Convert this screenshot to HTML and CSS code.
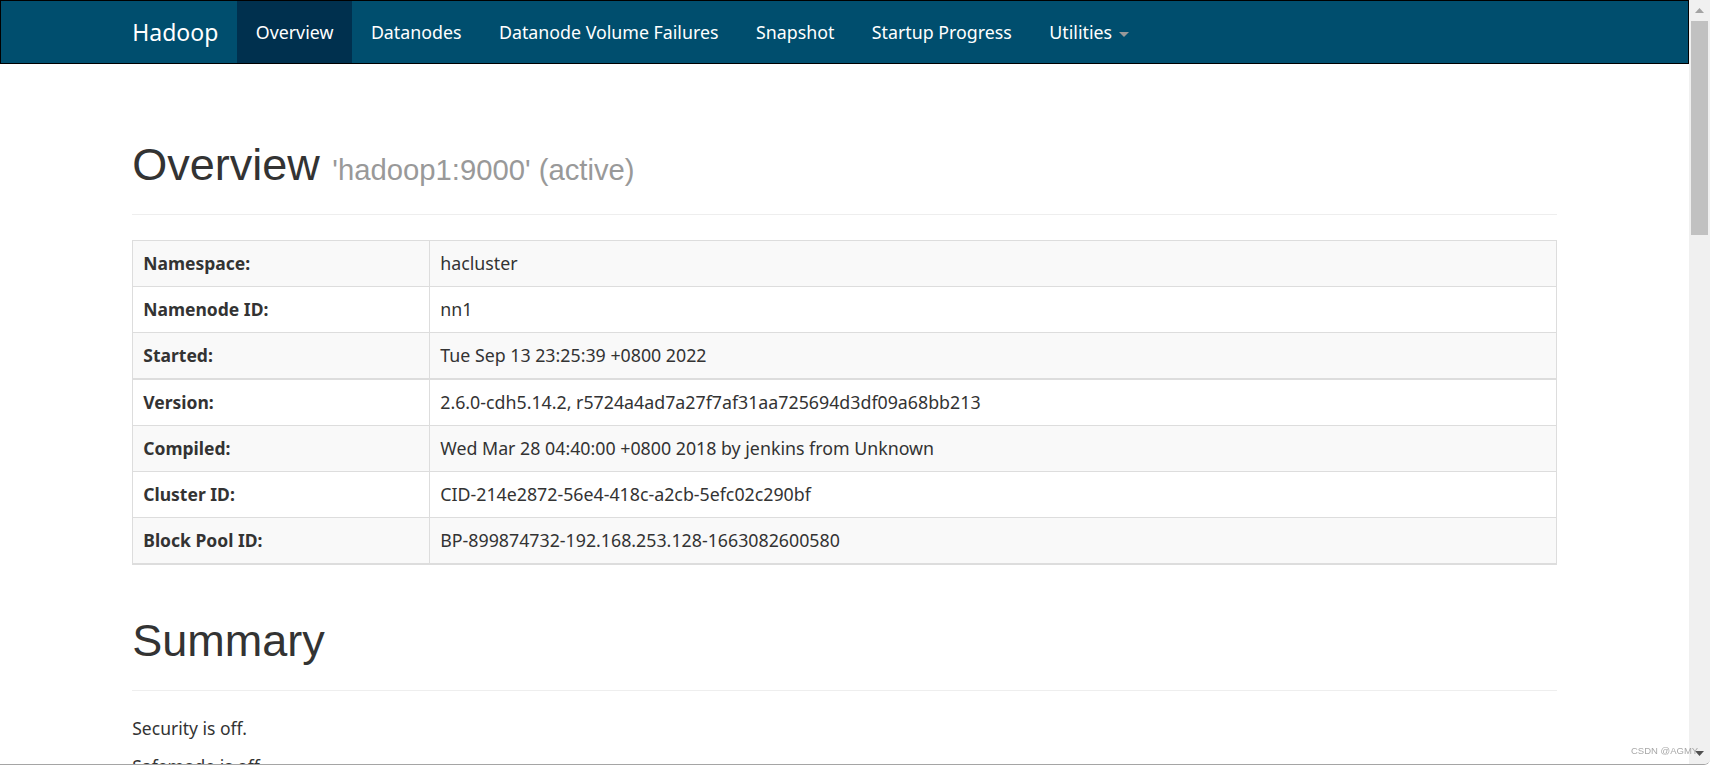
FILE: index.html
```html
<!DOCTYPE html>
<html lang="en">
<head>
<meta charset="utf-8">
<title>Namenode information</title>
<link rel="stylesheet" href="styles.css">
</head>
<body>
<div class="window">
  <div class="viewport">
    <nav class="navbar">
      <div class="container nav-inner">
        <a class="brand" href="#">Hadoop</a>
        <ul class="nav">
          <li class="active"><a href="#">Overview</a></li>
          <li><a href="#">Datanodes</a></li>
          <li><a href="#">Datanode Volume Failures</a></li>
          <li><a href="#">Snapshot</a></li>
          <li><a href="#">Startup Progress</a></li>
          <li><a href="#">Utilities <span class="caret"></span></a></li>
        </ul>
      </div>
    </nav>
    <div class="container main">
      <div class="page-header">
        <h1>Overview <small>'hadoop1:9000' (active)</small></h1>
      </div>
      <table class="info">
        <colgroup><col class="label-col"><col></colgroup>
        <tbody>
          <tr><th>Namespace:</th><td>hacluster</td></tr>
          <tr><th>Namenode ID:</th><td>nn1</td></tr>
          <tr><th>Started:</th><td>Tue Sep 13 23:25:39 +0800 2022</td></tr>
          <tr class="group-start"><th>Version:</th><td>2.6.0-cdh5.14.2, r5724a4ad7a27f7af31aa725694d3df09a68bb213</td></tr>
          <tr><th>Compiled:</th><td>Wed Mar 28 04:40:00 +0800 2018 by jenkins from Unknown</td></tr>
          <tr><th>Cluster ID:</th><td>CID-214e2872-56e4-418c-a2cb-5efc02c290bf</td></tr>
          <tr class="last"><th>Block Pool ID:</th><td>BP-899874732-192.168.253.128-1663082600580</td></tr>
        </tbody>
      </table>
      <div class="page-header">
        <h1>Summary</h1>
      </div>
      <p>Security is off.</p>
      <p>Safemode is off.</p>
    </div>
  </div>
  <div class="scrollbar">
    <div class="sb-btn">
      <svg width="9" height="5" viewBox="0 0 9 5"><polygon points="4.5,0 9,5 0,5" fill="#a3a3a3"/></svg>
    </div>
    <div class="sb-thumb"></div>
    <div class="sb-track"></div>
    <div class="sb-btn">
      <svg width="9" height="5" viewBox="0 0 9 5"><polygon points="0,0 9,0 4.5,5" fill="#505050"/></svg>
    </div>
  </div>
</div>
<div class="watermark">CSDN @AGMY</div>
</body>
</html>
```
FILE: styles.css
```css
html, body {
  margin: 0;
  padding: 0;
  height: 765px;
  overflow: hidden;
  background: #fff;
}

body {
  font-family: "Noto Sans", "Open Sans", sans-serif;
  font-size: 17.5px;
  line-height: 25px;
  color: #333;
}

.window {
  display: flex;
  height: 764px;
  border-bottom: 1px solid #a5a5a5;
  border-bottom-right-radius: 6px;
  overflow: hidden;
}

.viewport {
  flex: 1;
  min-width: 0;
  overflow: hidden;
}

.container {
  width: 1462px;
  margin: 0 auto;
  padding: 0 18.75px;
  box-sizing: border-box;
}

.main {
  padding-top: 25px;
}

/* navbar */
.navbar {
  height: 64px;
  box-sizing: border-box;
  border: 1px solid #000;
  background: #004e6e;
}

.nav-inner {
  display: flex;
  padding: 0;
  height: 62px;
}

.brand {
  display: block;
  padding: 0 18.75px;
  line-height: 62px;
  font-size: 23px;
  color: #fff;
  text-decoration: none;
}

.nav {
  display: flex;
  list-style: none;
  margin: 0;
  padding: 0;
}

.nav a {
  display: block;
  padding: 0 18.75px;
  line-height: 62px;
  font-size: 17.8px;
  color: #fff;
  text-decoration: none;
  white-space: nowrap;
}

.nav .active a {
  background: #00304e;
}

.caret {
  display: inline-block;
  width: 0;
  height: 0;
  margin-left: 2px;
  vertical-align: middle;
  border-top: 5px solid #999;
  border-left: 5px solid transparent;
  border-right: 5px solid transparent;
}

/* headers */
.page-header {
  margin: 51px 0 25px;
  padding-bottom: 12px;
  border-bottom: 1px solid #eee;
}

.page-header h1 {
  margin: 0 0 12.5px;
  font-family: "Liberation Sans", Arial, sans-serif;
  font-size: 45px;
  line-height: 1.1;
  font-weight: normal;
  color: #333;
}

.page-header h1 small {
  font-size: 65%;
  font-weight: normal;
  line-height: 1;
  color: #999;
}

/* table */
.info {
  width: 100%;
  table-layout: fixed;
  border-collapse: collapse;
  border: 1px solid #ddd;
  margin-bottom: 25px;
}

.label-col {
  width: 297px;
}

.info th,
.info td {
  border: 1px solid #ddd;
  padding: 10px;
  line-height: 25px;
  text-align: left;
  vertical-align: top;
}

.info th {
  font-weight: bold;
}

.info td {
  font-size: 17.8px;
}

.info tr:nth-child(odd) {
  background: #f9f9f9;
}

.info .group-start th,
.info .group-start td {
  border-top-width: 2px;
}

.info .last th,
.info .last td {
  border-bottom-width: 2px;
}

p {
  margin: 0 0 12.5px;
}

/* fake window scrollbar */
.scrollbar {
  flex: none;
  width: 21px;
  background: #f0f0f0;
  display: flex;
  flex-direction: column;
  align-items: center;
}

.sb-btn {
  width: 21px;
  height: 21px;
  display: flex;
  align-items: center;
  justify-content: center;
}

.sb-thumb {
  width: 17px;
  height: 214px;
  background: #c1c1c1;
}

.sb-track {
  flex: 1;
}

.watermark {
  position: fixed;
  left: 1631px;
  top: 745px;
  font-family: "Liberation Sans", Arial, sans-serif;
  font-size: 9.5px;
  line-height: 12px;
  color: #a8a8a8;
  white-space: nowrap;
}
```
